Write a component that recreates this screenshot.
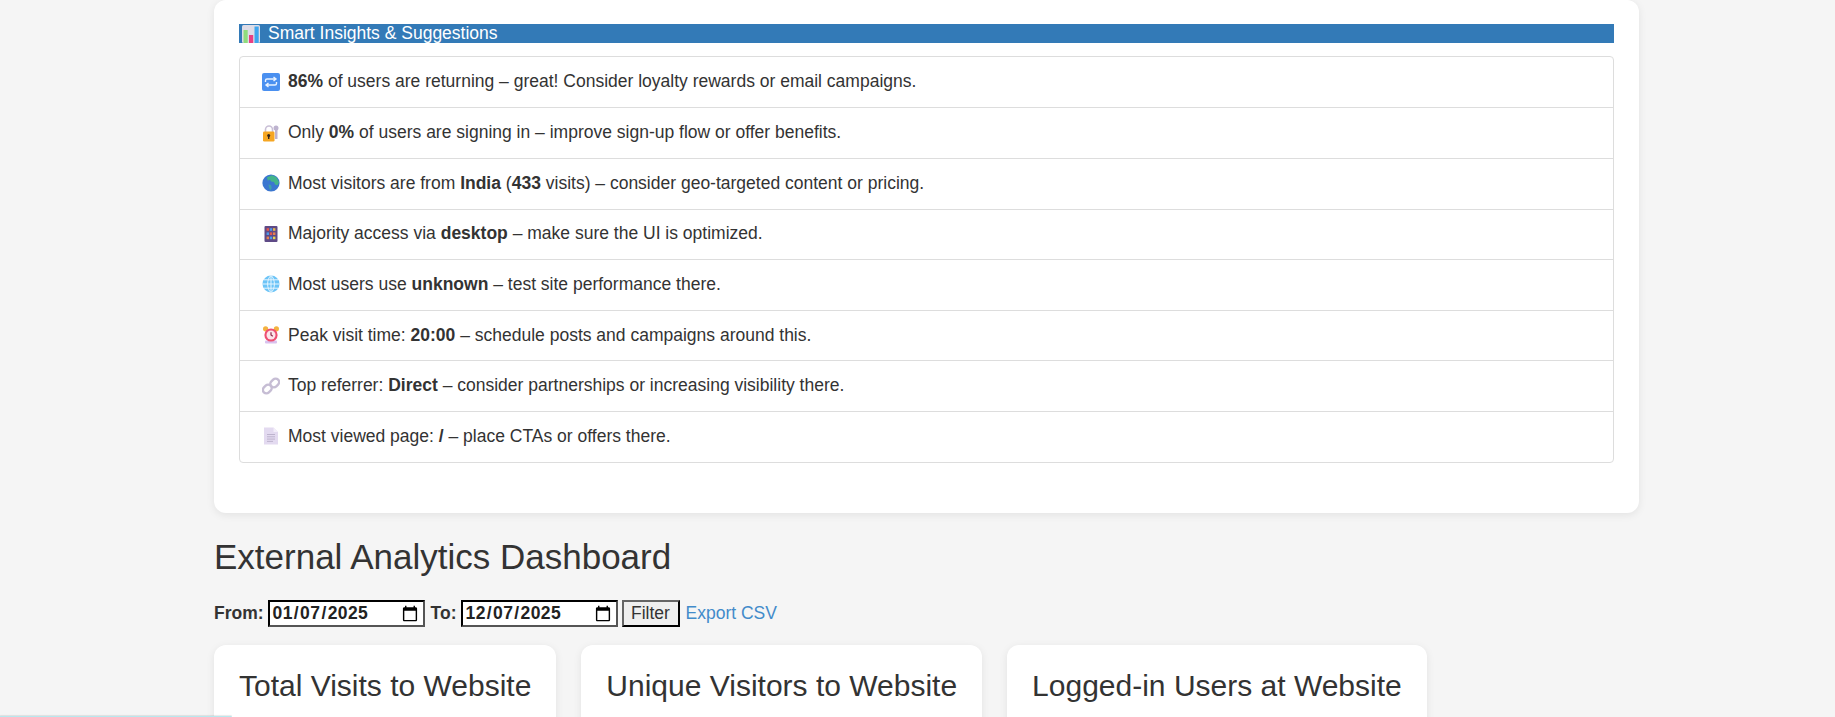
<div class="page">
  <section class="panel">
    <h3 class="banner">
      <svg class="bar-icon" viewBox="0 0 18 18" aria-hidden="true">
        <rect x="0" y="0" width="18" height="18" rx="1.5" fill="#dedce6" />
        <rect x="1.5" y="5" width="4.2" height="13" fill="#8fdc7c" />
        <rect x="7" y="10" width="4.2" height="8" fill="#ea3f83" />
        <rect x="12.5" y="1.5" width="4.2" height="16.5" fill="#3ea6ee" />
      </svg>
      Smart Insights &amp; Suggestions
    </h3>
    <ul class="list">
      <li>
        <svg class="ico" viewBox="0 0 18 18" aria-hidden="true">
          <rect width="18" height="18" rx="2" fill="#4a90f0" />
          <path d="M3.5 9V7.5A1.5 1.5 0 0 1 5 6h8.5M11.5 4l2.5 2-2.5 2M14.5 9v1.5a1.5 1.5 0 0 1-1.5 1.5H4.5M6.5 10l-2.5 2 2.5 2" fill="none" stroke="#e8f2ff" stroke-width="1.4" />
        </svg>
        <span><b>86%</b> of users are returning – great! Consider loyalty rewards or email campaigns.</span>
      </li>
      <li>
        <svg class="ico" viewBox="0 0 18 18" aria-hidden="true">
          <path d="M3.5 8V5.5a3.5 3.5 0 0 1 7 0V8" fill="none" stroke="#c9bfd6" stroke-width="1.6" />
          <circle cx="14" cy="4" r="2.5" fill="#bdb3cf" />
          <path d="M13 5h2.5v10H13z" fill="#bdb3cf" />
          <rect x="1" y="7.5" width="11.5" height="10" rx="1.2" fill="#f5a623" />
          <circle cx="6.7" cy="11.5" r="1.5" fill="#33241a" />
          <rect x="6" y="11.5" width="1.4" height="3.5" fill="#33241a" />
        </svg>
        <span>Only <b>0%</b> of users are signing in – improve sign-up flow or offer benefits.</span>
      </li>
      <li>
        <svg class="ico" viewBox="0 0 18 18" aria-hidden="true">
          <circle cx="9" cy="9" r="8.6" fill="#3b76d0" />
          <path d="M5 3.2 10 1.2l4.5 2 2.6 5-1.6 3-2.5-.6-1-2.6-3-.4-1-2.2L5.8 6.8z" fill="#43b48a" />
          <path d="M6.5 10.5 9 11l.8 3-1.5 2.4-1.2-2.6z" fill="#3f9fa8" />
        </svg>
        <span>Most visitors are from <b>India</b> (<b>433</b> visits) – consider geo-targeted content or pricing.</span>
      </li>
      <li>
        <svg class="ico" viewBox="0 0 18 18" aria-hidden="true">
          <rect x="2.5" y="1" width="13" height="16" rx="1" fill="#5e4a86" />
          <rect x="4.6" y="3.2" width="2.4" height="2.6" fill="#e4574e" />
          <rect x="7.8" y="3.2" width="2.4" height="2.6" fill="#4f9be8" />
          <rect x="11" y="3.2" width="2.4" height="2.6" fill="#e8b94f" />
          <rect x="4.6" y="7.4" width="2.4" height="2.6" fill="#4f9be8" />
          <rect x="7.8" y="7.4" width="2.4" height="2.6" fill="#e4574e" />
          <rect x="11" y="7.4" width="2.4" height="2.6" fill="#e8814f" />
          <rect x="4.6" y="11.6" width="2.4" height="2.6" fill="#e8814f" />
          <rect x="7.8" y="11.6" width="2.4" height="2.6" fill="#4f9be8" />
          <rect x="11" y="11.6" width="2.4" height="2.6" fill="#e8d44f" />
        </svg>
        <span>Majority access via <b>desktop</b> – make sure the UI is optimized.</span>
      </li>
      <li>
        <svg class="ico" viewBox="0 0 18 18" aria-hidden="true">
          <circle cx="9" cy="9" r="8.5" fill="#6cc4f7" />
          <path d="M.5 9h17M2 4.8h14M2 13.2h14M9 .5v17M9 .5C4.5 4 4.5 14 9 17.5M9 .5c4.5 3.5 4.5 13.5 0 17" fill="none" stroke="#e6f6ff" stroke-width="1" />
        </svg>
        <span>Most users use <b>unknown</b> – test site performance there.</span>
      </li>
      <li>
        <svg class="ico" viewBox="0 0 18 18" aria-hidden="true">
          <circle cx="3.6" cy="2.8" r="2.6" fill="#f4b23f" />
          <circle cx="14.4" cy="2.8" r="2.6" fill="#f4b23f" />
          <rect x="3" y="14.5" width="12" height="3" rx="1" fill="#d9c2ee" />
          <circle cx="9" cy="9" r="6.6" fill="#ee4f72" />
          <circle cx="9" cy="9" r="4.5" fill="#fbe4ea" />
          <path d="M9 6.2V9l1.8 1.2" fill="none" stroke="#8e2a4a" stroke-width="1.2" />
        </svg>
        <span>Peak visit time: <b>20:00</b> – schedule posts and campaigns around this.</span>
      </li>
      <li>
        <svg class="ico" viewBox="0 0 18 18" aria-hidden="true">
          <g fill="none" stroke="#c6bdd4" stroke-width="2.4">
            <rect x="9.2" y="1.2" width="7" height="9.5" rx="3.5" transform="rotate(45 12.7 6)" />
            <rect x="1.8" y="7.3" width="7" height="9.5" rx="3.5" transform="rotate(45 5.3 12)" />
          </g>
        </svg>
        <span>Top referrer: <b>Direct</b> – consider partnerships or increasing visibility there.</span>
      </li>
      <li>
        <svg class="ico" viewBox="0 0 18 18" aria-hidden="true">
          <path d="M2 .5h9.5L16 5v12.500H2z" fill="#e3daf0" />
          <path d="M11.5.5 16 5h-4.5z" fill="#f3eefa" />
          <path d="M5 7.5h8M5 9.8h8M5 12.1h8M5 14.4h6" stroke="#b9afc8" stroke-width=".9" />
        </svg>
        <span>Most viewed page: <b>/</b> – place CTAs or offers there.</span>
      </li>
    </ul>
  </section>

  <h1 class="title">External Analytics Dashboard</h1>

  <form class="filters" onsubmit={(e) => e.preventDefault()}>
    <label for="from">From:</label>
    <input id="from" type="date" value="2025-01-07" />
    <label class="to" for="to">To:</label>
    <input id="to" type="date" value="2025-12-07" />
    <button type="submit">Filter</button>
    <a href="#export" onclick={(e) => e.preventDefault()}>Export CSV</a>
  </form>

  <div class="cards">
    <div class="card"><h2>Total Visits to Website</h2></div>
    <div class="card"><h2>Unique Visitors to Website</h2></div>
    <div class="card"><h2>Logged-in Users at Website</h2></div>
  </div>

  <div class="progress"></div>
</div>

<style>
  :global(html), :global(body) {
    margin: 0;
    height: 100%;
    overflow: hidden;
    background: #f5f5f5;
  }
  .page {
    box-sizing: border-box;
    height: 717px;
    overflow: hidden;
    padding-left: 214px;
    font-family: "Liberation Sans", Arial, sans-serif;
    font-size: 17.5px;
    line-height: 1.42857;
    color: #333;
  }
  .panel {
    box-sizing: border-box;
    width: 1425px;
    height: 513px;
    padding: 24px 25px 0;
    background: #fff;
    border-radius: 12px;
    box-shadow: 0 2px 8px rgba(0, 0, 0, 0.08);
  }
  .banner {
    display: flex;
    align-items: center;
    gap: 8px;
    height: 19px;
    margin: 0 0 13px;
    padding-left: 1px;
    background: #337ab7;
    color: #fff;
    font-size: 17.5px;
    font-weight: 400;
    line-height: 19px;
  }
  .bar-icon {
    width: 18px;
    height: 18px;
    margin-left: 2px;
    flex: none;
  }
  .list {
    margin: 0;
    padding: 0;
    list-style: none;
    border: 1px solid #ddd;
    border-radius: 4px;
  }
  .list li {
    display: flex;
    align-items: center;
    gap: 8px;
    padding: 0 22px 1px;
    border-top: 1px solid #ddd;
    height: 50.6px;
    box-sizing: border-box;
  }
  .list li:first-child {
    border-top: 0;
    height: 50.4px;
  }
  .ico {
    width: 18px;
    height: 18px;
    flex: none;
  }
  .title {
    margin: 24px 0 0;
    font-size: 35px;
    font-weight: 400;
    line-height: 40px;
  }
  .filters {
    display: flex;
    align-items: center;
    gap: 4px;
    margin-top: 23px;
    height: 27px;
  }
  .filters label {
    font-weight: 700;
  }
  .filters .to {
    margin-left: 2px;
  }
  .filters input {
    box-sizing: border-box;
    width: 157px;
    height: 27px;
    font-family: "Liberation Sans", Arial, sans-serif;
    font-size: 17.5px;
    letter-spacing: 0.4px;
    font-weight: 700;
    color: #222;
    background: #fff;
    border: 2px inset #555;
    padding: 1px 2px;
  }
  .filters button {
    box-sizing: border-box;
    width: 58px;
    height: 27px;
    padding: 1px 0;
    font-family: "Liberation Sans", Arial, sans-serif;
    font-size: 17.5px;
    color: #333;
    background: #efefef;
    border: 2px outset #111;
  }
  .filters a {
    color: #428bca;
    text-decoration: none;
    margin-left: 2px;
  }
  .cards {
    display: flex;
    gap: 25px;
    margin-top: 18px;
  }
  .card {
    padding: 21px 25px 200px;
    background: #fff;
    border-radius: 12px;
    box-shadow: 0 2px 8px rgba(0, 0, 0, 0.08);
  }
  .card h2 {
    margin: 0;
    font-size: 30px;
    font-weight: 400;
    line-height: 40px;
  }
  .progress {
    position: fixed;
    left: 0;
    bottom: 0;
    width: 232px;
    height: 1px;
    background: #b9e8ee;
    border-top-right-radius: 2px;
    box-shadow: 0 -1px 1px rgba(0, 0, 0, 0.1);
  }
</style>
